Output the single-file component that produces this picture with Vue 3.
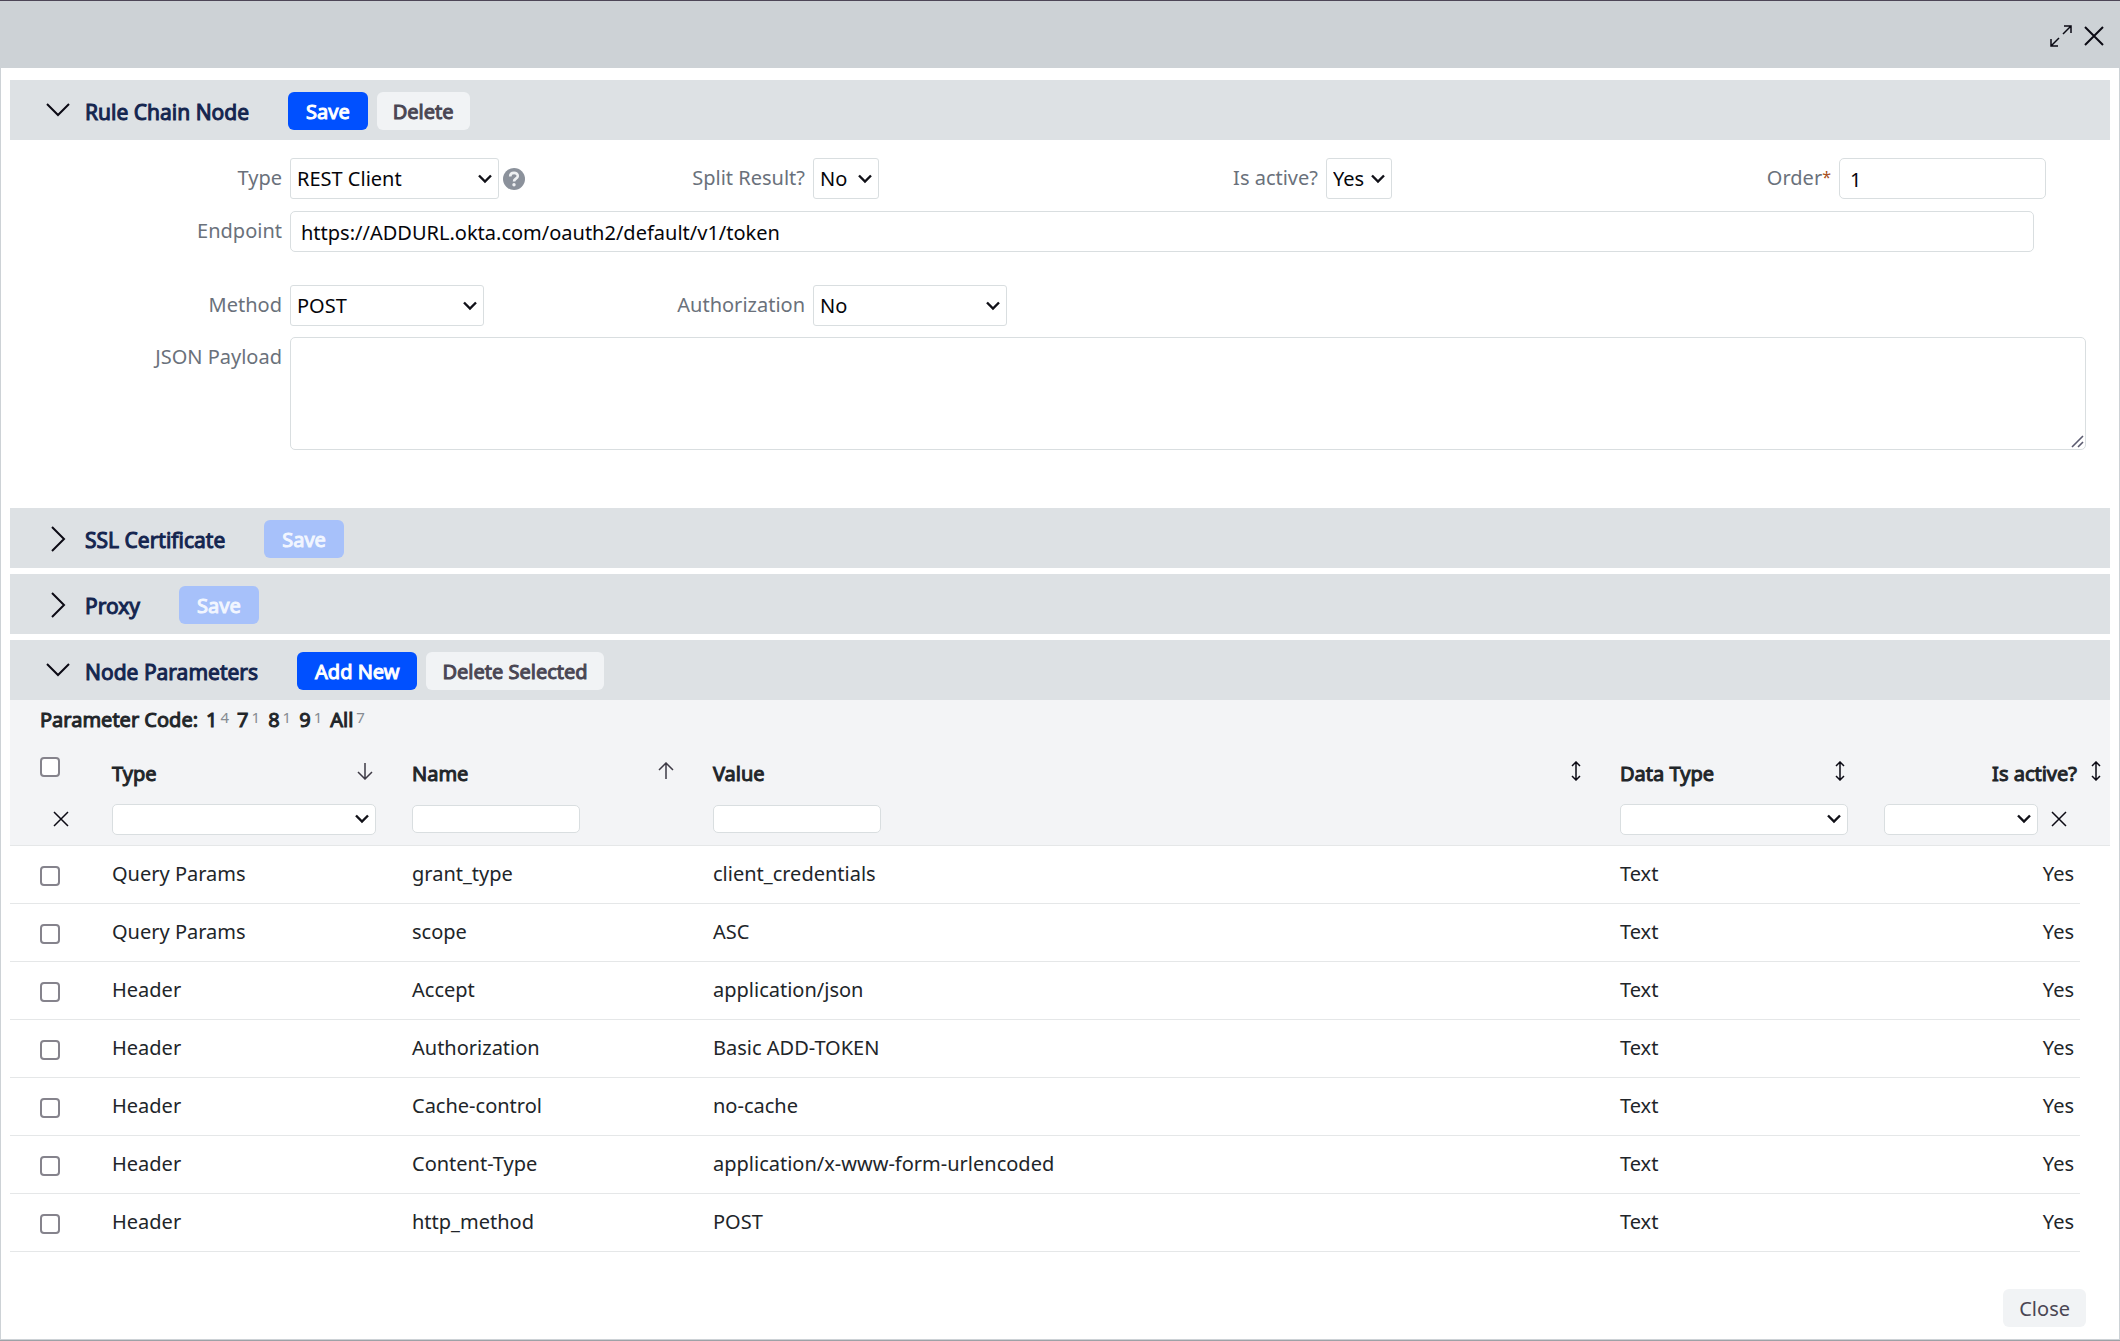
<script setup>
import { ref } from 'vue'

const type = ref('REST Client')
const split = ref('No')
const active = ref('Yes')
const order = ref('1')
const endpoint = ref('https://ADDURL.okta.com/oauth2/default/v1/token')
const method = ref('POST')
const authorization = ref('No')
const payload = ref('')

const codes = [
  { code: '1', count: 4 },
  { code: '7', count: 1 },
  { code: '8', count: 1 },
  { code: '9', count: 1 },
  { code: 'All', count: 7 },
]

const rows = [
  { type: 'Query Params', name: 'grant_type', value: 'client_credentials' },
  { type: 'Query Params', name: 'scope', value: 'ASC' },
  { type: 'Header', name: 'Accept', value: 'application/json' },
  { type: 'Header', name: 'Authorization', value: 'Basic ADD-TOKEN' },
  { type: 'Header', name: 'Cache-control', value: 'no-cache' },
  { type: 'Header', name: 'Content-Type', value: 'application/x-www-form-urlencoded' },
  { type: 'Header', name: 'http_method', value: 'POST' },
]
</script>

<template>
  <main class="dialog">
    <header class="titlebar">
      <button class="icon-btn" aria-label="Expand">
        <svg width="22" height="22" viewBox="0 0 22 22" class="line">
          <path d="M13 9 L21 1 M14 1 H21 V8 M9 13 L1 21 M1 14 V21 H8" />
        </svg>
      </button>
      <button class="icon-btn" aria-label="Close dialog">
        <svg width="20" height="20" viewBox="0 0 20 20" class="line bold">
          <path d="M1 1 L19 19 M19 1 L1 19" />
        </svg>
      </button>
    </header>

    <div class="content">
      <section>
        <div class="bar">
          <button class="toggle" aria-label="Collapse Rule Chain Node">
            <svg width="26" height="26" viewBox="0 0 26 26" class="line bold"><path d="M2 6 L13 17 L24 6" /></svg>
          </button>
          <h2>Rule Chain Node</h2>
          <button class="btn primary">Save</button>
          <button class="btn strong">Delete</button>
        </div>
        <div class="form">
          <div class="fields">
            <div class="field">
              <label for="type">Type</label>
              <select id="type" v-model="type" class="w-type"><option>REST Client</option></select>
              <svg class="help" width="22" height="22" viewBox="0 0 22 22">
                <circle cx="11" cy="11" r="11" fill="#8b919b" />
                <path d="M7.2 8.5 C7.2 3.6 14.8 3.8 14.8 8 C14.8 10.7 11 10.6 11 13.4" fill="none" stroke="#eef0f2" stroke-width="2.6" />
                <circle cx="11" cy="16.8" r="1.7" fill="#eef0f2" />
              </svg>
            </div>
            <div class="field">
              <label for="split">Split Result?</label>
              <select id="split" v-model="split" class="w-short"><option>No</option><option>Yes</option></select>
            </div>
            <div class="field">
              <label for="active">Is active?</label>
              <select id="active" v-model="active" class="w-short"><option>Yes</option><option>No</option></select>
            </div>
            <div class="field">
              <label for="order">Order<span class="req">*</span></label>
              <input id="order" v-model="order" type="text" class="w-order" />
            </div>
          </div>
          <div class="field endpoint">
            <label for="endpoint">Endpoint</label>
            <input id="endpoint" v-model="endpoint" type="text" class="grow" />
          </div>
          <div class="fields method">
            <div class="field">
              <label for="method">Method</label>
              <select id="method" v-model="method" class="w-mid"><option>POST</option><option>GET</option></select>
            </div>
            <div class="field">
              <label for="authorization">Authorization</label>
              <select id="authorization" v-model="authorization" class="w-mid"><option>No</option><option>Yes</option></select>
            </div>
          </div>
          <div class="field payload">
            <label for="payload">JSON Payload</label>
            <div class="area grow">
              <textarea id="payload" v-model="payload"></textarea>
              <svg class="grip" width="13" height="13" viewBox="0 0 13 13"><path d="M1 12 L12 1 M7 12 L12 7" /></svg>
            </div>
          </div>
        </div>
      </section>

      <section>
        <div class="bar">
          <button class="toggle" aria-label="Expand SSL Certificate">
            <svg width="26" height="26" viewBox="0 0 26 26" class="line bold"><path d="M7 1 L19 13 L7 25" /></svg>
          </button>
          <h2>SSL Certificate</h2>
          <button class="btn primary" disabled>Save</button>
        </div>
      </section>

      <section>
        <div class="bar">
          <button class="toggle" aria-label="Expand Proxy">
            <svg width="26" height="26" viewBox="0 0 26 26" class="line bold"><path d="M7 1 L19 13 L7 25" /></svg>
          </button>
          <h2>Proxy</h2>
          <button class="btn primary" disabled>Save</button>
        </div>
      </section>

      <section>
        <div class="bar">
          <button class="toggle" aria-label="Collapse Node Parameters">
            <svg width="26" height="26" viewBox="0 0 26 26" class="line bold"><path d="M2 6 L13 17 L24 6" /></svg>
          </button>
          <h2>Node Parameters</h2>
          <button class="btn primary">Add New</button>
          <button class="btn strong">Delete Selected</button>
        </div>
        <div class="codes">
          <span>Parameter Code:</span>
          <a v-for="c in codes" :key="c.code" href="#">{{ c.code }}<small>{{ c.count }}</small></a>
        </div>
        <table>
          <colgroup>
            <col class="c-check" /><col class="c-type" /><col class="c-name" /><col />
            <col class="c-data" /><col class="c-active" /><col class="c-end" />
          </colgroup>
          <thead>
            <tr class="names">
              <th class="check"><input type="checkbox" aria-label="Select all rows" /></th>
              <th>
                <div class="head">Type
                  <svg width="16" height="18" viewBox="0 0 16 18" class="line soft"><path d="M8 1 V17 M1 10 L8 17 L15 10" /></svg>
                </div>
              </th>
              <th>
                <div class="head">Name
                  <svg width="16" height="18" viewBox="0 0 16 18" class="line soft"><path d="M8 17 V1 M1 8 L8 1 L15 8" /></svg>
                </div>
              </th>
              <th>
                <div class="head">Value
                  <svg width="10" height="20" viewBox="0 0 10 20" class="line"><path d="M5 1 V19 M1 5 L5 1 L9 5 M1 15 L5 19 L9 15" /></svg>
                </div>
              </th>
              <th>
                <div class="head">Data Type
                  <svg width="10" height="20" viewBox="0 0 10 20" class="line"><path d="M5 1 V19 M1 5 L5 1 L9 5 M1 15 L5 19 L9 15" /></svg>
                </div>
              </th>
              <th class="right">Is active?</th>
              <th class="end">
                <svg width="10" height="20" viewBox="0 0 10 20" class="line"><path d="M5 1 V19 M1 5 L5 1 L9 5 M1 15 L5 19 L9 15" /></svg>
              </th>
            </tr>
            <tr class="filters">
              <td class="clear">
                <button class="icon-btn" aria-label="Clear filters">
                  <svg width="16" height="16" viewBox="0 0 16 16" class="line"><path d="M1 1 L15 15 M15 1 L1 15" /></svg>
                </button>
              </td>
              <td><select class="grow" aria-label="Filter by type"><option></option></select></td>
              <td><input type="text" class="w-filter" aria-label="Filter by name" /></td>
              <td><input type="text" class="w-filter" aria-label="Filter by value" /></td>
              <td><select class="grow" aria-label="Filter by data type"><option></option></select></td>
              <td class="last">
                <div class="pair">
                  <select class="grow" aria-label="Filter by active"><option></option></select>
                  <button class="icon-btn" aria-label="Clear filters">
                    <svg width="16" height="16" viewBox="0 0 16 16" class="line"><path d="M1 1 L15 15 M15 1 L1 15" /></svg>
                  </button>
                </div>
              </td>
              <td></td>
            </tr>
          </thead>
          <tbody>
            <tr v-for="r in rows" :key="r.name">
              <td class="check"><input type="checkbox" :aria-label="'Select ' + r.name" /></td>
              <td>{{ r.type }}</td>
              <td>{{ r.name }}</td>
              <td>{{ r.value }}</td>
              <td>Text</td>
              <td class="right">Yes</td>
              <td class="blank"></td>
            </tr>
          </tbody>
        </table>
      </section>

      <footer>
        <button class="btn">Close</button>
      </footer>
    </div>
  </main>
</template>

<style>
body {
  background: #fff;
}
</style>

<style scoped>
.dialog,
.dialog * {
  box-sizing: border-box;
}
.dialog {
  display: flex;
  flex-direction: column;
  min-height: 100vh;
  border-top: 1px solid #4d4657;
  border-bottom: 1px solid #9da2a7;
  color: #212529;
  font: 20px/28px "Noto Sans", sans-serif;
}
button,
input,
select,
textarea {
  font: inherit;
  margin: 0;
}
.titlebar {
  display: flex;
  justify-content: flex-end;
  align-items: center;
  gap: 12px;
  height: 67px;
  padding: 3px 16px 0 0;
  background: #cdd2d6;
}
.icon-btn,
.toggle {
  display: flex;
  padding: 0;
  border: 0;
  background: none;
  cursor: pointer;
}
.line {
  display: block;
  flex: none;
  fill: none;
  stroke: #0b0a14;
  stroke-width: 1.5;
}
.line.bold {
  stroke-width: 2;
}
.line.soft {
  stroke: #3d3a45;
}
.content {
  flex: 1;
  padding: 12px 9px;
  border: 1px solid #cdd2d6;
  border-top: 0;
}
.bar {
  display: flex;
  align-items: center;
  height: 60px;
  margin-bottom: 6px;
  padding: 2px 0 0 35px;
  background: #dde1e4;
}
section:first-child .bar,
section:last-of-type .bar {
  margin-bottom: 0;
}
h2 {
  margin: 2px 39px 0 14px;
  color: #14254f;
  font-size: 21px;
  font-weight: 400;
  -webkit-text-stroke: 1px;
}
.btn {
  height: 38px;
  padding: 2px 16px 0;
  border: 0;
  border-radius: 6px;
  background: #f1f3f5;
  color: #4a4653;
  cursor: pointer;
}
.btn + .btn {
  margin-left: 9px;
}
.btn.primary {
  padding: 2px 18px 0;
  background: #0050ff;
  color: #fff;
  -webkit-text-stroke: 1px;
}
.btn.primary:disabled {
  background: #a7c1fa;
  color: #f2f6ff;
}
.btn.strong {
  -webkit-text-stroke: 1px;
}
.form {
  padding: 18px 24px 58px 0;
}
.fields {
  display: grid;
  grid-template-columns: 523fr 513fr 513fr 527fr;
}
.field {
  display: flex;
  align-items: center;
}
.field label {
  flex: none;
  width: 280px;
  padding: 0 8px 2px 0;
  text-align: right;
  color: #6a717b;
}
.req {
  color: #a8501c;
  font-size: 16px;
  line-height: 1;
  vertical-align: 2px;
}
.endpoint {
  margin-top: 12px;
  padding-right: 52px;
}
.method {
  margin-top: 33px;
}
.payload {
  align-items: flex-start;
  margin-top: 11px;
}
.payload label {
  padding-top: 6px;
}
select,
input[type="text"],
textarea {
  height: 41px;
  border: 1px solid #d9dee0;
  border-radius: 5px;
  outline: 0;
  background: #fff;
  color: #05050a;
}
input[type="text"] {
  padding: 1px 10px 0;
}
select {
  appearance: none;
  padding: 0 24px 0 6px;
  border-radius: 3px;
  background: #fff url("data:image/svg+xml,%3Csvg xmlns='http://www.w3.org/2000/svg' width='14' height='10'%3E%3Cpath d='M1 1.5 L7 7.5 L13 1.5' fill='none' stroke='%23111118' stroke-width='2.4'/%3E%3C/svg%3E") no-repeat right 6px center;
}
.w-type {
  width: 209px;
}
.w-mid {
  width: 194px;
}
.w-short {
  width: 66px;
}
.w-order {
  width: 207px;
}
.w-filter {
  width: 168px;
}
.grow {
  flex: 1;
  width: 100%;
}
.help {
  margin-left: 4px;
}
.area {
  position: relative;
}
textarea {
  display: block;
  width: 100%;
  height: 113px;
  resize: none;
}
.grip {
  position: absolute;
  right: 2px;
  bottom: 2px;
  fill: none;
  stroke: #5b5b70;
  stroke-width: 1.6;
}
.codes {
  display: flex;
  gap: 8px;
  padding: 6px 30px 13px;
  background: #f3f4f6;
}
.codes span,
.codes a {
  color: #212529;
  text-decoration: none;
  -webkit-text-stroke: 1px;
}
.codes small {
  margin-left: 3px;
  vertical-align: 4px;
  color: #868b92;
  font-size: 15px;
  line-height: 1;
  -webkit-text-stroke: 0;
}
table {
  width: 100%;
  table-layout: fixed;
  border-collapse: collapse;
}
.c-check {
  width: 92px;
}
.c-type {
  width: 300px;
}
.c-name {
  width: 301px;
}
.c-data {
  width: 264px;
}
.c-active {
  width: 206px;
}
.c-end {
  width: 30px;
}
thead {
  background: #f3f4f6;
}
th,
td {
  padding: 0 26px 0 10px;
  text-align: left;
  font-weight: 400;
}
.names {
  height: 49px;
}
th {
  padding-top: 4px;
  -webkit-text-stroke: 1px;
}
.head {
  display: flex;
  justify-content: space-between;
  align-items: center;
  padding-right: 3px;
}
.head svg {
  margin-bottom: 5px;
}
.filters td {
  height: 49px;
  padding-bottom: 2px;
}
.filters select {
  display: block;
  height: 31px;
  border-radius: 5px;
}
.filters input {
  display: block;
  height: 28px;
}
.filters .clear {
  padding-left: 43px;
}
.filters .last {
  padding-right: 13px;
}
.pair {
  display: flex;
  align-items: center;
  gap: 13px;
}
.end {
  padding: 0 0 1px 11px;
}
tbody tr {
  height: 58px;
}
tbody td,
.filters td {
  border-bottom: 1px solid #e5e7e8;
}
tbody .blank {
  border-bottom: 0;
}
.check {
  padding: 4px 0 0 30px;
}
th.check {
  padding: 0 0 9px 30px;
}
.check input {
  display: block;
  width: 20px;
  height: 20px;
  appearance: none;
  border: 2px solid #85838c;
  border-radius: 4px;
  background: #fff;
}
.check input:checked {
  background: #0050ff;
}
.right {
  padding-right: 6px;
  text-align: right;
}
th.right {
  padding-right: 3px;
}
footer {
  display: flex;
  justify-content: flex-end;
  padding: 37px 24px 0 0;
}
</style>
